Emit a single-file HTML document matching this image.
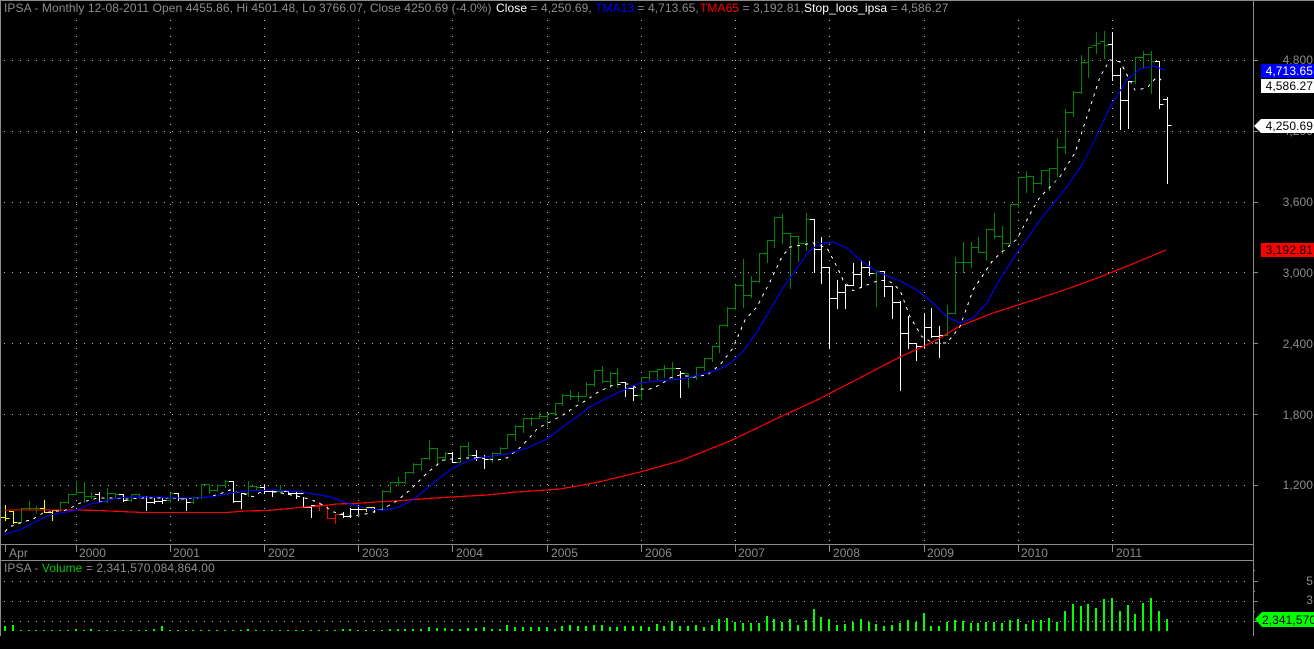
<!DOCTYPE html>
<html>
<head>
<meta charset="utf-8">
<style>
html,body{margin:0;padding:0;background:#000;overflow:hidden}
svg{display:block;position:absolute;left:0;top:0}
text{font-family:"Liberation Sans",Arial,sans-serif;font-size:12px;fill:#8c8c8c;white-space:pre;letter-spacing:.08px}
.c{shape-rendering:crispEdges;fill:none}
.a{text-anchor:end}
.k{fill:#000}
</style>
</head>
<body>
<svg id="s" width="1314" height="649" viewBox="0 0 1314 649" xmlns="http://www.w3.org/2000/svg">
<rect width="1314" height="649" fill="#000"/>
<g id="grid" class="c" stroke="#b8b8b8"></g>
<g class="c" stroke="#8c8c8c">
<path d="M0 .5H1314M.5 0V636M0 544.5H1253M0 560.5H1253M1253.5 0V636"/>
<path id="ticks"/>
</g>
<g id="bars" class="c"></g>
<g id="vol" class="c" stroke="#00ff00" stroke-width="2"></g>
<polyline id="red" class="c" stroke="#ff0000" stroke-width="1.2"/>
<polyline id="white" class="c" stroke="#ffffff" stroke-width="1" stroke-dasharray="3 5"/>
<polyline id="blue" class="c" stroke="#0000ff" stroke-width="1.1"/>

<text x="4" y="12">IPSA - Monthly 12-08-2011 Open 4455.86, Hi 4501.48, Lo 3766.07, Close 4250.69 (-4.0%)</text>
<text x="496" y="12"><tspan fill="#fff">Close</tspan> = 4,250.69,</text>
<text x="595" y="12"><tspan fill="#0000ff">TMA13</tspan> = 4,713.65,</text>
<text x="700" y="12"><tspan fill="#ff0000">TMA65</tspan> = 3,192.81,</text>
<text x="804" y="12"><tspan fill="#fff">Stop_loos_ipsa</tspan> = 4,586.27</text>
<text x="4" y="572">IPSA - <tspan fill="#00c800">Volume</tspan> = 2,341,570,084,864.00</text>

<text x="9" y="557">Apr</text>
<text x="79" y="557">2000</text><text x="173" y="557">2001</text><text x="268" y="557">2002</text>
<text x="362" y="557">2003</text><text x="456" y="557">2004</text><text x="551" y="557">2005</text>
<text x="645" y="557">2006</text><text x="738" y="557">2007</text><text x="833" y="557">2008</text>
<text x="927" y="557">2009</text><text x="1021" y="557">2010</text><text x="1116" y="557">2011</text>

<text class="a" x="1313" y="64">4,800</text>
<text class="a" x="1313" y="135">4,200</text>
<text class="a" x="1313" y="206">3,600</text>
<text class="a" x="1313" y="277">3,000</text>
<text class="a" x="1313" y="348">2,400</text>
<text class="a" x="1313" y="419">1,800</text>
<text class="a" x="1313" y="489">1,200</text>
<text class="a" x="1313" y="585">5</text>
<text class="a" x="1313" y="604">3</text>

<rect x="1261" y="64" width="53" height="14" fill="#0000ff"/>
<text class="a" x="1313" y="75" style="fill:#fff">4,713.65</text>
<rect x="1261" y="79" width="53" height="14" fill="#fff"/>
<text class="a k" x="1313" y="90" style="fill:#000">4,586.27</text>
<polygon points="1254,126 1261,119 1314,119 1314,133 1261,133" fill="#fff"/>
<text class="a" x="1313" y="130" style="fill:#000">4,250.69</text>
<rect x="1261" y="243" width="53" height="14" fill="#ff0000"/>
<text class="a" x="1313" y="254" style="fill:#000">3,192.81</text>
<polygon points="1255,619 1262,612 1314,612 1314,627 1262,627" fill="#00ff00"/>
<text x="1262" y="624" style="fill:#000">2,341,570</text>
</svg>
<script>
var X=function(i){return 75.7+7.85*i};
var years=[];for(var y=0;y<12;y++)years.push(X(12*y));
var g='',t='M5.5 545V552';
[60,131,202,272,343,414,485,581,601,621].forEach(function(y){
  g+='<path stroke-dasharray="1 7" d="M4 '+(y+.5)+'H1252"/>';
  t+='M1253 '+(y+.5)+'H1258';
});
years.forEach(function(x){
  x=Math.round(x)+.5;
  g+='<path stroke-dasharray="1 7" d="M'+x+' 20V541"/>';
  t+='M'+x+' 545V552';
});
[570,591,611].forEach(function(y){t+='M1253 '+(y+.5)+'H1255'});
document.getElementById('grid').innerHTML=g;
document.getElementById('ticks').setAttribute('d',t);

var D=[[5,505,520,518,'y',517],[13,511,523,522,'y',511],[21,508,522,508,'g'],[29,501,510,508,'g'],[37,506,512,508,'g'],[44,500,512,512,'y',508],[52,510,520,510,'y'],[60,502,511,502,'g'],[68,494,503,494,'g'],[76,481,494,492,'g'],[84,482,502,496,'g'],[91,492,498,496,'g'],[99,492,502,501,'w',494],[107,488,502,493,'g'],[115,493,498,494,'g'],[123,494,501,500,'w'],[131,494,501,494,'g'],[139,494,498,496,'g'],[147,496,510,502,'w'],[154,498,503,501,'w'],[162,498,503,500,'w'],[170,493,502,493,'g'],[178,493,500,498,'w'],[186,498,510,502,'w'],[194,497,503,497,'g'],[202,484,498,484,'g'],[210,484,493,490,'g'],[218,485,491,485,'g'],[226,480,487,481,'g'],[233,481,502,501,'w'],[241,493,508,493,'w'],[249,481,496,486,'g'],[257,486,490,487,'g'],[265,485,493,491,'w'],[273,490,496,491,'w'],[281,485,493,491,'g'],[288,491,494,493,'w'],[296,492,498,493,'w'],
[304,497,507,507,'w'],[312,505,517,505,'w'],[320,502,510,505,'r'],[328,506,518,518,'r'],[336,514,523,514,'r'],[344,512,517,516,'w'],[351,508,517,509,'w'],[359,505,513,509,'w'],[366,507,511,507,'y'],[374,507,512,509,'y'],[382,490,509,491,'g'],[390,482,492,482,'g'],[398,477,485,482,'g'],[406,472,483,472,'g'],[413,463,473,464,'g'],[421,458,470,458,'g'],[429,440,459,448,'g'],[437,448,465,457,'g'],[445,452,460,453,'g'],[453,452,462,462,'w',453],[460,446,462,446,'g'],[468,442,458,455,'g'],[476,450,460,457,'w'],[484,455,468,459,'w'],[492,452,462,453,'g'],[500,447,454,448,'g'],
[507,434,448,434,'g'],[515,425,440,426,'g',434],[523,418,432,418,'g'],[531,417,425,418,'g'],[538,412,418,416,'g'],[546,413,426,413,'g'],[554,403,415,403,'g'],[562,394,405,395,'g'],[570,390,399,396,'g'],[578,392,401,396,'g'],[586,382,396,384,'g'],[593,370,386,370,'g'],[601,366,382,381,'g'],[609,372,387,373,'g'],[617,368,387,382,'g'],[625,382,396,388,'w'],[632,385,400,395,'w'],[640,377,399,377,'g'],[648,371,380,371,'g'],[656,369,379,369,'g'],[664,365,377,368,'g'],[672,362,378,368,'g'],[680,371,397,373,'w'],[688,374,387,377,'g'],[695,367,379,367,'g'],[703,358,370,358,'g'],[711,346,361,346,'g'],[719,325,352,325,'g'],[727,307,326,308,'g'],[734,285,309,285,'g'],[743,259,307,295,'g'],[751,276,297,281,'g'],[759,253,282,253,'g'],[766,240,262,240,'g'],[774,217,247,217,'g'],[782,214,243,233,'g'],[790,233,288,236,'g'],[798,236,261,243,'g'],[806,213,250,219,'g'],[813,219,272,249,'w'],[821,237,283,267,'w'],[829,267,348,298,'w'],[837,280,308,292,'w'],[845,284,308,285,'w'],[853,263,285,274,'w'],[861,260,287,267,'w'],[869,261,275,273,'w'],[877,270,306,271,'g'],[884,271,296,286,'w'],[892,286,318,302,'w'],[899,301,390,333,'w'],[907,316,348,343,'w'],[915,343,360,346,'w'],[923,313,347,327,'w'],[932,308,337,336,'w'],[939,326,357,335,'w'],[947,305,335,313,'g'],[955,257,313,262,'g'],[962,242,272,262,'g'],[970,242,267,247,'g'],[978,237,252,252,'g'],[986,229,260,229,'g'],[993,213,238,236,'g'],[1001,226,253,243,'g'],[1009,204,243,204,'g'],
[1017,177,207,177,'g'],[1025,171,192,176,'g'],[1033,176,192,183,'g'],[1041,170,184,170,'g'],[1049,168,190,168,'g'],[1056,138,176,147,'g'],[1064,109,153,112,'g'],[1072,91,116,92,'g'],[1080,55,93,62,'g'],[1088,47,77,47,'g'],[1096,32,53,43,'g',45],[1104,31,58,45,'g',41],[1112,32,80,75,'w',44],[1120,68,129,100,'w',75],[1128,81,128,81,'w'],[1136,57,83,57,'g'],[1143,51,68,54,'g'],[1150,51,93,61,'g'],[1159,61,108,104,'w'],[1167,97,183,125,'w',99]];
var cols={g:'#008800',w:'#ffffff',y:'#ffff00',r:'#ff0000'},pd={g:'',w:'',y:'',r:''},prev=null;
D.forEach(function(b){
  var i=Math.round((b[0]-75.7)/7.85),x=Math.round(X(i))+.5,o=b[5]!==undefined?b[5]:(prev===null?b[3]:prev);
  pd[b[4]]+='M'+x+' '+b[1]+'V'+(b[2]+1)+'M'+(x-4.5)+' '+(o+.5)+'H'+x+'M'+x+' '+(b[3]+.5)+'H'+(x+4);
  prev=b[3];
});
var h='';for(var k in pd)h+='<path stroke="'+cols[k]+'" d="'+pd[k]+'"/>';
document.getElementById('bars').innerHTML=h;

var V={};
for(var i=-9;i<28;i++)V[i]=1;
V[-9]=5;V[-8]=6;V[0]=2;V[2]=2;V[10]=2;V[11]=5;V[22]=2;
[1,1,1,1,1,1,2,2,1,1,1,1,2,2,2,2,2,4,3,3,2,2,3,3,4,2,2,6,4,4,4,4,4,2,5,6,5,5,6,6,4,4,5,5,5,4,7,5,
10,5,5,6,4,6,12,13,9,8,8,8,15,12,9,12,6,11,22,14,12,6,7,9,12,9,7,5,6,8,11,9,18,5,5,9,11,10,8,8,9,9,8,11,12,7,11,11,13,9,20,
27,25,27,23,32,33,20,26,17,28,33,20,12].forEach(function(v,n){V[28+n]=v});
var vp='';
for(var i=-9;i<140;i++){var x=Math.round(X(i));vp+='M'+x+' 631V'+(631-V[i])}
document.getElementById('vol').innerHTML='<path d="'+vp+'"/>';

document.getElementById('red').setAttribute('points','5,510 77,510 100,510.5 110,511 143,512.5 227,512.5 245,511 267,510.5 290,508.5 300,507.3 320,506 337,504 357,503.3 377,502 400,500.7 430,498.3 457,496.7 487,495 513,492.3 533,491 560,489 583,485 600,481.7 640,472 680,461 730,441 780,417 817,400 850,383 900,357 933,342 960,326 993,313 1040,298 1070,288 1100,277 1130,265 1166,250');
document.getElementById('blue').setAttribute('points','5,534 20,530 33,523 50,515 77,510 90,504 103,501.7 117,498 140,496.7 157,497 177,498 197,498 213,496.7 233,492.7 250,490.7 277,490 300,491.7 313,494 330,496.7 343,501.7 357,506 370,509 383,510.3 397,507.7 410,501.7 423,491.7 437,480 453,468 470,460 487,456.7 507,454 527,448 547,439 560,429 577,416.7 590,406.7 603,400 620,391.7 640,383 660,380.7 680,379.3 700,375 717,370 728,365 743,351.7 757,331.7 770,310 783,288 797,268 810,250 822,243 833,242 847,248 860,260 877,271.7 900,281 917,290 933,303 947,316.7 960,323 973,318 987,303 1000,279 1017,253 1040,220 1058,198 1067,186.7 1083,163 1097,135 1110,107 1127,80 1140,69 1153,66 1165,70');
document.getElementById('white').setAttribute('points','5,531.7 10,526.7 20,523 33,519 43,513 53,511.7 67,510 80,503 97,498 113,498 127,499 147,498 163,498 183,499 203,498 217,495 230,490 253,496.7 263,490.7 280,492.7 300,496.7 312,500 323,505 333,511.7 350,516 360,515 370,513 383,509 397,500.7 410,490 427,473 443,460 463,458 480,458 497,460 507,458 522,446 538,428 552,421 563,415 575,406.7 587,400 598,392 613,385 628,384 637,388 647,390 660,385 670,378 680,375 693,377 707,375 720,365 733,348 745,320 757,306.7 770,281.7 782,256.7 790,247 813,243 827,248 837,266.7 843,280 853,290.7 867,285 880,280 890,281.7 900,290 910,316.7 922,336.7 933,343 947,343 960,326.7 973,290 993,260 1017,239 1030,214 1040,197 1060,176.7 1075,153 1087,116.7 1100,76.7 1110,60 1120,61.7 1128,76.7 1135,90 1147,88 1157,76.7 1165,83');
</script>
</body>
</html>
